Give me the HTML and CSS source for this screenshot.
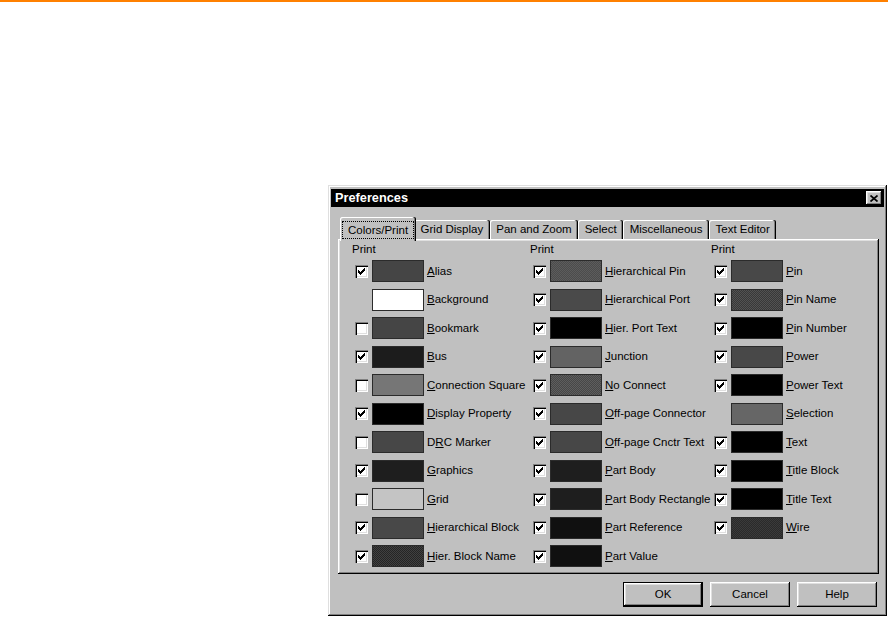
FILE: index.html
```html
<!DOCTYPE html>
<html>
<head>
<meta charset="utf-8">
<link rel="stylesheet" href="styles.css">
</head>
<body>
<div class="topbar"></div>
<div class="dialog">
  <div class="titlebar">
    <span class="title">Preferences</span>
    <span class="close"><svg width="8" height="7" viewBox="0 0 8 7"><path d="M0.5 0.5 L7.5 6.5 M7.5 0.5 L0.5 6.5" stroke="#000" stroke-width="1.7" fill="none"/></svg></span>
  </div>
  <div class="tabs">
    <div class="tab active"><span class="focus">Colors/Print</span></div>
    <div class="tab">Grid Display</div>
    <div class="tab">Pan and Zoom</div>
    <div class="tab">Select</div>
    <div class="tab">Miscellaneous</div>
    <div class="tab">Text Editor</div>
  </div>
  <div class="panel">
    <div class="cols">
      <div class="col">
        <div class="hdr">Print</div>
        <div class="row"><span class="cb on"></span><span class="sw" style="background:#454545"></span><span class="lbl"><u>A</u>lias</span></div>
        <div class="row"><span class="cb none"></span><span class="sw" style="background:#ffffff"></span><span class="lbl"><u>B</u>ackground</span></div>
        <div class="row"><span class="cb"></span><span class="sw" style="background:#454545"></span><span class="lbl"><u>B</u>ookmark</span></div>
        <div class="row"><span class="cb on"></span><span class="sw" style="background:#1c1c1c"></span><span class="lbl"><u>B</u>us</span></div>
        <div class="row"><span class="cb"></span><span class="sw" style="background:#767676"></span><span class="lbl"><u>C</u>onnection Square</span></div>
        <div class="row"><span class="cb on"></span><span class="sw" style="background:#000000"></span><span class="lbl"><u>D</u>isplay Property</span></div>
        <div class="row"><span class="cb"></span><span class="sw" style="background:#474747"></span><span class="lbl">D<u>R</u>C Marker</span></div>
        <div class="row"><span class="cb on"></span><span class="sw" style="background:#1e1e1e"></span><span class="lbl"><u>G</u>raphics</span></div>
        <div class="row"><span class="cb"></span><span class="sw" style="background:#c4c4c4"></span><span class="lbl"><u>G</u>rid</span></div>
        <div class="row"><span class="cb on"></span><span class="sw" style="background:#484848"></span><span class="lbl"><u>H</u>ierarchical Block</span></div>
        <div class="row"><span class="cb on"></span><span class="sw dither" style="--a:#252525;--b:#404040"></span><span class="lbl"><u>H</u>ier. Block Name</span></div>
      </div>
      <div class="col">
        <div class="hdr">Print</div>
        <div class="row"><span class="cb on"></span><span class="sw dither" style="--a:#4c4c4c;--b:#5c5c5c"></span><span class="lbl"><u>H</u>ierarchical Pin</span></div>
        <div class="row"><span class="cb on"></span><span class="sw" style="background:#4a4a4a"></span><span class="lbl"><u>H</u>ierarchical Port</span></div>
        <div class="row"><span class="cb on"></span><span class="sw" style="background:#000000"></span><span class="lbl"><u>H</u>ier. Port Text</span></div>
        <div class="row"><span class="cb on"></span><span class="sw" style="background:#636363"></span><span class="lbl"><u>J</u>unction</span></div>
        <div class="row"><span class="cb on"></span><span class="sw dither" style="--a:#474747;--b:#5e5e5e"></span><span class="lbl"><u>N</u>o Connect</span></div>
        <div class="row"><span class="cb on"></span><span class="sw" style="background:#474747"></span><span class="lbl"><u>O</u>ff-page Connector</span></div>
        <div class="row"><span class="cb on"></span><span class="sw" style="background:#474747"></span><span class="lbl"><u>O</u>ff-page Cnctr Text</span></div>
        <div class="row"><span class="cb on"></span><span class="sw" style="background:#1e1e1e"></span><span class="lbl"><u>P</u>art Body</span></div>
        <div class="row"><span class="cb on"></span><span class="sw" style="background:#1e1e1e"></span><span class="lbl"><u>P</u>art Body Rectangle</span></div>
        <div class="row"><span class="cb on"></span><span class="sw" style="background:#101010"></span><span class="lbl"><u>P</u>art Reference</span></div>
        <div class="row"><span class="cb on"></span><span class="sw" style="background:#101010"></span><span class="lbl"><u>P</u>art Value</span></div>
      </div>
      <div class="col">
        <div class="hdr">Print</div>
        <div class="row"><span class="cb on"></span><span class="sw" style="background:#484848"></span><span class="lbl"><u>P</u>in</span></div>
        <div class="row"><span class="cb on"></span><span class="sw dither" style="--a:#383838;--b:#525252"></span><span class="lbl"><u>P</u>in Name</span></div>
        <div class="row"><span class="cb on"></span><span class="sw" style="background:#000000"></span><span class="lbl"><u>P</u>in Number</span></div>
        <div class="row"><span class="cb on"></span><span class="sw" style="background:#484848"></span><span class="lbl"><u>P</u>ower</span></div>
        <div class="row"><span class="cb on"></span><span class="sw" style="background:#000000"></span><span class="lbl"><u>P</u>ower Text</span></div>
        <div class="row"><span class="cb none"></span><span class="sw" style="background:#666666"></span><span class="lbl"><u>S</u>election</span></div>
        <div class="row"><span class="cb on"></span><span class="sw" style="background:#000000"></span><span class="lbl"><u>T</u>ext</span></div>
        <div class="row"><span class="cb on"></span><span class="sw" style="background:#000000"></span><span class="lbl"><u>T</u>itle Block</span></div>
        <div class="row"><span class="cb on"></span><span class="sw" style="background:#000000"></span><span class="lbl"><u>T</u>itle Text</span></div>
        <div class="row"><span class="cb on"></span><span class="sw dither" style="--a:#2a2a2a;--b:#3a3a3a"></span><span class="lbl"><u>W</u>ire</span></div>
      </div>
    </div>
  </div>
  <div class="btns">
    <div class="btn default">OK</div>
    <div class="btn">Cancel</div>
    <div class="btn">Help</div>
  </div>
</div>
</body>
</html>
```
FILE: styles.css
```css
html, body {
  margin: 0;
  padding: 0;
  background: #ffffff;
}
body {
  font-family: "Liberation Sans", Arial, sans-serif;
  font-size: 11.5px;
  color: #000;
}
.topbar {
  height: 2px;
  background: #ff8000;
}
.dialog {
  box-sizing: border-box;
  width: 559px;
  margin: 183px 0 0 328px;
  padding: 4px 3px 9px;
  background: #c0c0c0;
  box-shadow: inset -1px -1px #000, inset 1px 1px #dfdfdf, inset -2px -2px #808080, inset 2px 2px #fff;
}
.titlebar {
  height: 18px;
  background: #000;
  color: #fff;
  display: flex;
  align-items: center;
  justify-content: space-between;
  padding: 0 2px 0 4px;
}
.title {
  font-weight: bold;
  font-size: 12.75px;
  line-height: 18px;
}
.close {
  width: 16px;
  height: 14px;
  box-sizing: border-box;
  background: #c0c0c0;
  display: flex;
  align-items: center;
  justify-content: center;
  box-shadow: inset -1px -1px #000, inset 1px 1px #fff, inset -2px -2px #808080, inset 2px 2px #dfdfdf;
}
.tabs {
  position: relative;
  z-index: 1;
  display: flex;
  align-items: flex-end;
  height: 22px;
  margin-top: 10px;
  padding-left: 11px;
}
.tab {
  box-sizing: border-box;
  height: 19px;
  line-height: 19px;
  padding: 0 6.5px;
  background: #c0c0c0;
  border-radius: 2px 2px 0 0;
  white-space: nowrap;
  box-shadow: inset -1px 0 #000, inset -2px 0 #808080, inset 1px 1px #fff;
}
.tab.active {
  height: 24px;
  margin: 0 -2px -2px;
  padding: 4px 2px 2px;
  position: relative;
  z-index: 2;
  line-height: 16px;
}
.focus {
  display: block;
  border: 1px dotted #000;
  padding: 0 5px;
  line-height: 16px;
}
.panel {
  margin: 0 5px 0 7px;
  padding: 2px 0 3.5px 17px;
  box-shadow: inset -1px -1px #000, inset 1px 1px #fff, inset -2px -2px #808080, inset 2px 2px #dfdfdf;
}
.cols {
  display: grid;
  grid-template-columns: 178px 181px 1fr;
}
.col {
  display: flex;
  flex-direction: column;
}
.hdr {
  height: 16px;
  line-height: 16px;
  margin-left: -3px;
}
.row {
  display: flex;
  align-items: center;
  height: 28.5px;
  white-space: nowrap;
}
.cb {
  flex: none;
  box-sizing: border-box;
  width: 13px;
  height: 13px;
  margin-right: 4px;
  background: #fff;
  box-shadow: inset 1px 1px #808080, inset 2px 2px #000, inset -1px -1px #fff, inset -2px -2px #dfdfdf;
}
.cb.on {
  background: #fff url("data:image/svg+xml,%3Csvg xmlns='http://www.w3.org/2000/svg' width='7' height='7' viewBox='0 0 7 7'%3E%3Cpath d='M6 0h1v3H6v1H5v1H4v1H3v1H2V6H1V5H0V2h1v1h1v1h1V3h1V2h1V1h1z' fill='%23000'/%3E%3C/svg%3E") no-repeat 3px 3px;
}
.cb.none {
  visibility: hidden;
}
.sw {
  flex: none;
  box-sizing: border-box;
  width: 52px;
  height: 22px;
  margin-right: 3px;
  border: 1px solid #2b2b2b;
}
.sw.dither {
  background-color: var(--a);
  background-image: repeating-conic-gradient(var(--a) 0 25%, var(--b) 0 50%);
  background-size: 2px 2px;
}
.lbl {
  padding-bottom: 1px;
}
.lbl u {
  text-decoration: underline;
  text-underline-offset: 1px;
}
.btns {
  display: flex;
  justify-content: flex-end;
  gap: 7px;
  margin-top: 8px;
  padding-right: 7px;
}
.btn {
  box-sizing: border-box;
  width: 80px;
  height: 25px;
  line-height: 25px;
  text-align: center;
  background: #c0c0c0;
  box-shadow: inset -1px -1px #000, inset 1px 1px #fff, inset -2px -2px #808080, inset 2px 2px #dfdfdf;
}
.btn.default {
  box-shadow: inset 0 0 0 1px #000, inset -2px -2px #000, inset 2px 2px #fff, inset -3px -3px #808080, inset 3px 3px #dfdfdf;
}
```
